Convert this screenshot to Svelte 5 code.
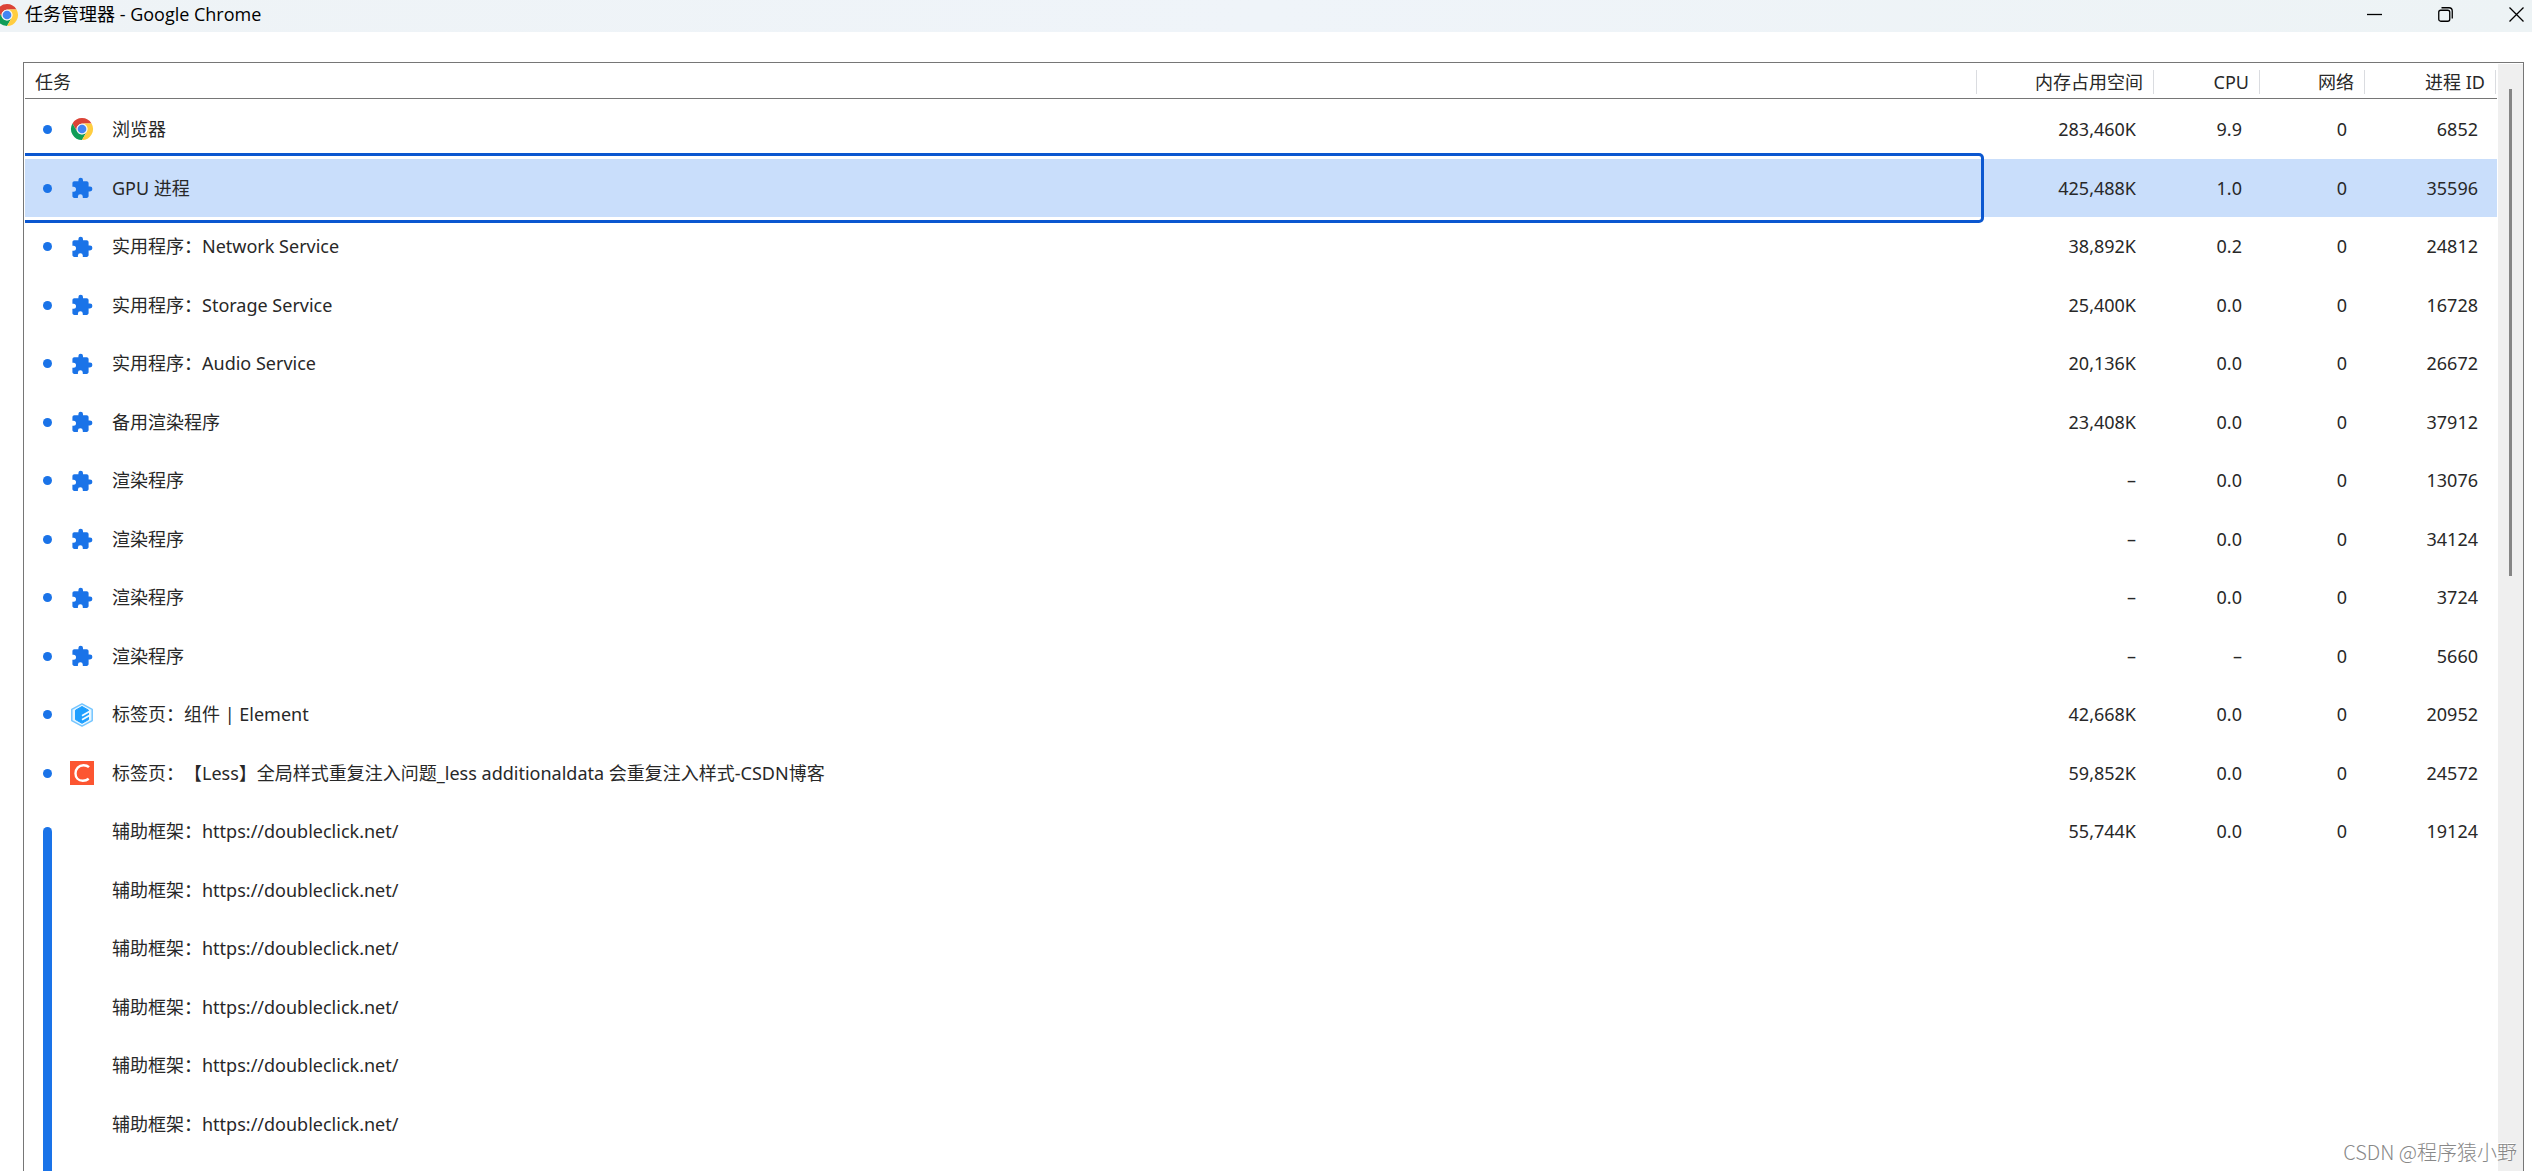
<script lang="ts">
  type Task = {
    icon?: "chrome" | "extension" | "element" | "csdn";
    title: string;
    memory?: string;
    cpu?: string;
    network?: string;
    pid?: string;
    grouped?: boolean;
  };

  const frame: Task = { title: "辅助框架：https://doubleclick.net/", grouped: true };

  const tasks: Task[] = [
    { icon: "chrome", title: "浏览器", memory: "283,460K", cpu: "9.9", network: "0", pid: "6852" },
    { icon: "extension", title: "GPU 进程", memory: "425,488K", cpu: "1.0", network: "0", pid: "35596" },
    { icon: "extension", title: "实用程序：Network Service", memory: "38,892K", cpu: "0.2", network: "0", pid: "24812" },
    { icon: "extension", title: "实用程序：Storage Service", memory: "25,400K", cpu: "0.0", network: "0", pid: "16728" },
    { icon: "extension", title: "实用程序：Audio Service", memory: "20,136K", cpu: "0.0", network: "0", pid: "26672" },
    { icon: "extension", title: "备用渲染程序", memory: "23,408K", cpu: "0.0", network: "0", pid: "37912" },
    { icon: "extension", title: "渲染程序", memory: "–", cpu: "0.0", network: "0", pid: "13076" },
    { icon: "extension", title: "渲染程序", memory: "–", cpu: "0.0", network: "0", pid: "34124" },
    { icon: "extension", title: "渲染程序", memory: "–", cpu: "0.0", network: "0", pid: "3724" },
    { icon: "extension", title: "渲染程序", memory: "–", cpu: "–", network: "0", pid: "5660" },
    { icon: "element", title: "标签页：组件 | Element", memory: "42,668K", cpu: "0.0", network: "0", pid: "20952" },
    {
      icon: "csdn",
      title: "标签页：【Less】全局样式重复注入问题_less additionaldata 会重复注入样式-CSDN博客",
      memory: "59,852K",
      cpu: "0.0",
      network: "0",
      pid: "24572",
    },
    { ...frame, memory: "55,744K", cpu: "0.0", network: "0", pid: "19124" },
    frame,
    frame,
    frame,
    frame,
    frame,
    { title: "", grouped: true },
  ];

  let selected = $state(1);
</script>

{#snippet chromeLogo()}
  <svg class="icon" viewBox="0 0 24 24" aria-hidden="true">
    <circle cx="12" cy="12" r="11" fill="#fff" />
    <path fill="#db4437" d="M12 1a11 11 0 0 1 9.53 5.5H12a5.5 5.5 0 0 0-4.76 2.75L2.47 6.5A11 11 0 0 1 12 1z" />
    <path fill="#db4437" d="M2.47 6.5 7.24 14.75A5.5 5.5 0 0 1 12 6.5z" />
    <path fill="#0f9d58" d="M2.47 6.5a11 11 0 0 0 9.53 16.5l4.76-8.25a5.5 5.5 0 0 1-9.52 0z" />
    <path fill="#ffcd40" d="M21.53 6.5A11 11 0 0 1 12 23l4.76-8.25A5.5 5.5 0 0 0 12 6.5z" />
    <circle cx="12" cy="12" r="5.3" fill="#f1f1f1" />
    <circle cx="12" cy="12" r="4.3" fill="#4285f4" />
  </svg>
{/snippet}

<div class="window" lang="zh-CN">
  <header>
    {@render chromeLogo()}
    <h1>任务管理器 - Google Chrome</h1>
    <div class="controls">
      <button aria-label="最小化">
        <svg viewBox="0 0 15 15"><path d="M0 7.5h15" /></svg>
      </button>
      <button aria-label="还原">
        <svg viewBox="0 0 15 15">
          <rect x="0.75" y="3.25" width="11" height="11" rx="2" />
          <path d="M3.5 .75h7.5a3.25 3.25 0 0 1 3.25 3.25v7.5" />
        </svg>
      </button>
      <button aria-label="关闭">
        <svg viewBox="0 0 15 15"><path d="M.5 .5l14 14M14.5 .5l-14 14" /></svg>
      </button>
    </div>
  </header>

  <main>
    <table>
      <thead>
        <tr>
          <th class="task"><span>任务</span></th>
          <th class="memory"><span>内存占用空间</span></th>
          <th class="cpu"><span>CPU</span></th>
          <th class="network"><span>网络</span></th>
          <th class="pid"><span>进程 ID</span></th>
        </tr>
      </thead>
      <tbody>
        {#each tasks as task, i}
          <tr class:selected={i === selected} onclick={() => (selected = i)}>
            <td class="task">
              <div class="task-cell">
                <span
                  class="marker"
                  class:bar={task.grouped}
                  class:first={task.grouped && !tasks[i - 1].grouped}
                ></span>
                <span class="icon-slot">
                  {#if task.icon === "chrome"}
                    {@render chromeLogo()}
                  {:else if task.icon === "extension"}
                    <svg class="icon" viewBox="0 0 24 24" aria-hidden="true">
                      <path
                        fill="#1a73e8"
                        d="M20 10.600h-1.400V7.200c0-1.050-.85-1.900-1.900-1.900H13V4.100a2.300 2.300 0 0 0-4.600 0v1.200H4.300c-1.050 0-1.880.85-1.880 1.900v3.500h1.100a2.500 2.500 0 0 1 0 5H2.400v4.400c0 1.050.85 1.900 1.900 1.900h3.600v-1.300a2.450 2.450 0 0 1 4.900 0V22h3.900c1.050 0 1.900-.85 1.900-1.900v-4.700H20a2.400 2.400 0 0 0 0-4.800z"
                      />
                    </svg>
                  {:else if task.icon === "element"}
                    <svg class="icon" viewBox="0 0 24 24" aria-hidden="true">
                      <path
                        fill="#e6f6ff"
                        stroke="#74c5ff"
                        stroke-width="1.5"
                        stroke-linejoin="round"
                        d="M12 .9 22.2 6.4v11.2L12 23.1 1.8 17.6V6.4z"
                      />
                      <path
                        fill="#1e9fff"
                        stroke="#1e9fff"
                        stroke-linejoin="round"
                        d="M12 3.5 18.5 7.2v9.400L12 20.300l-6.500-3.700V7.200z"
                      />
                      <path
                        fill="none"
                        stroke="#f4fbff"
                        stroke-width="1.8"
                        d="M19.800 8.300 12 12.800M19.800 12.300 12 16.800"
                      />
                    </svg>
                  {:else if task.icon === "csdn"}
                    <svg class="icon" viewBox="0 0 24 24" aria-hidden="true">
                      <rect width="24" height="24" fill="#fc5531" />
                      <path
                        fill="none"
                        stroke="#fff"
                        stroke-width="2.4"
                        d="M19 6.200C17.500 4.700 15.700 4.200 13.500 4.200 8.800 4.200 5.500 7.700 5.500 12.500c0 4.400 2.800 7.200 7.300 7.200 2.300 0 4.300-.6 5.900-1.900"
                      />
                    </svg>
                  {/if}
                </span>
                <span>{task.title}</span>
              </div>
            </td>
            <td>{task.memory ?? ""}</td>
            <td>{task.cpu ?? ""}</td>
            <td>{task.network ?? ""}</td>
            <td>{task.pid ?? ""}</td>
          </tr>
        {/each}
      </tbody>
    </table>
    <div class="scrollbar"><div class="thumb"></div></div>
  </main>

  <p class="watermark">CSDN @程序猿小野</p>
</div>

<style>
  :global(body) {
    margin: 0;
    background: #fff;
  }

  .window {
    height: 100vh;
    display: flex;
    flex-direction: column;
    overflow: hidden;
    position: relative;
    font-family: "Noto Sans", "Noto Sans CJK SC", sans-serif;
    font-size: 18px;
    line-height: 24px;
    text-spacing-trim: space-all;
    color: #282828;
  }

  header {
    flex: none;
    height: 32px;
    display: flex;
    gap: 6px;
    background: linear-gradient(90deg, #eef3f6, #eff4f9 50%, #edf3f5);
  }

  header .icon {
    margin: 3px 0 0 -5px;
  }

  h1 {
    margin: 2px 0 0;
    flex: 1;
    font-family: "Open Sans", "Noto Sans CJK SC", sans-serif;
    font-size: 18px;
    font-weight: 400;
    color: #000;
  }

  .controls {
    display: flex;
    gap: 40px;
  }

  button {
    width: 31px;
    height: 29px;
    padding: 0;
    border: none;
    background: transparent;
    display: flex;
    align-items: center;
    justify-content: center;
  }

  button svg {
    width: 15px;
    height: 15px;
    fill: none;
    stroke: #000;
    stroke-width: 1.3;
  }

  .icon {
    display: block;
    width: 24px;
    height: 24px;
    flex: none;
  }

  main {
    flex: 1;
    min-height: 0;
    margin: 30px 8px 0 23px;
    padding-left: 1px;
    border: 1px solid #767676;
    border-bottom: none;
    display: flex;
    align-items: flex-start;
    gap: 1px;
    overflow: hidden;
  }

  table {
    flex: 1;
    table-layout: fixed;
    border-collapse: separate;
    border-spacing: 0;
  }

  th {
    box-sizing: border-box;
    height: 36px;
    padding: 7px 1px 4px 0;
    border-bottom: 1px solid #767676;
    font-weight: 400;
    text-align: right;
  }

  th span {
    display: block;
    padding-right: 10px;
    border-right: 1px solid #dadce0;
  }

  th.task {
    text-align: left;
  }

  th.task span {
    padding-left: 10px;
  }

  .memory {
    width: 177px;
  }

  .cpu {
    width: 106px;
  }

  .network {
    width: 105px;
  }

  .pid {
    width: 131px;
  }

  td {
    height: 59px;
    padding: 0 19px 0 0;
    line-height: 25px;
    text-align: right;
    white-space: nowrap;
  }

  tr:nth-child(even) td {
    height: 58px;
  }

  tbody tr:first-child td {
    height: 60px;
  }

  td.task {
    position: relative;
    padding: 0 0 0 18px;
    text-align: left;
  }

  .task-cell {
    height: 100%;
    display: flex;
    align-items: center;
    gap: 18px;
  }

  .selected td {
    background: #c9defb;
  }

  .selected td.task::after {
    content: "";
    position: absolute;
    inset: -6px -6px -6px 0;
    border: 3px solid #0b57d0;
    border-left: none;
    border-radius: 0 5px 5px 0;
    z-index: 1;
  }

  .marker {
    width: 9px;
    height: 9px;
    border-radius: 50%;
    background: #1a73e8;
  }

  .marker.bar {
    height: auto;
    align-self: stretch;
    border-radius: 0;
  }

  .marker.first {
    margin-top: 25px;
    border-radius: 5px 5px 0 0;
  }

  .icon-slot {
    width: 24px;
    height: 24px;
  }

  .scrollbar {
    width: 25px;
    align-self: stretch;
    margin-top: 1px;
    background: #efefef;
  }

  .thumb {
    width: 3px;
    height: 44%;
    margin: 25px auto 0 11px;
    background: #858585;
  }

  .watermark {
    position: absolute;
    right: 15px;
    bottom: 7px;
    margin: 0;
    font-family: "Noto Sans CJK SC", sans-serif;
    font-size: 20px;
    font-weight: 300;
    color: #888;
    text-shadow: -1px -1px 0 #fff;
    z-index: 2;
  }
</style>
